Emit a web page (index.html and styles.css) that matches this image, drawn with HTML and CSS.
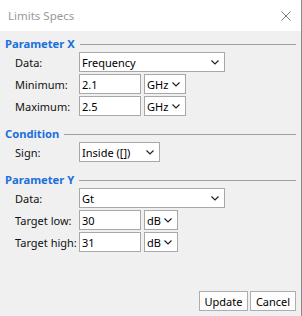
FILE: index.html
```html
<!DOCTYPE html>
<html lang="en">
<head>
    <meta charset="UTF-8">
    <title>Limits Specs</title>
    <link rel="stylesheet" href="styles.css">
</head>
<body>
    <div class="window">
        <div class="titlebar">
            <span class="title">Limits Specs</span>
            <span class="close">
                <svg width="10" height="10" viewBox="0 0 10 10"><path d="M0.5 0.5 L9.5 9.5 M9.5 0.5 L0.5 9.5" stroke="#7a7a7a" stroke-width="1" fill="none"/></svg>
            </span>
        </div>
        <div class="content">
            <div class="group-title"><span>Parameter X</span><div class="rule"></div></div>
            <div class="rows">
                <label>Data:</label>
                <div class="combo wide"><span>Frequency</span><svg class="chev" width="8" height="5" viewBox="0 0 8 5"><path d="M0.5 0.5 L4 4 L7.5 0.5" stroke="#222" stroke-width="1.2" fill="none"/></svg></div>
                <label>Minimum:</label>
                <div class="pair"><input class="num" value="2.1"><div class="combo unit-ghz"><span>GHz</span><svg class="chev" width="8" height="5" viewBox="0 0 8 5"><path d="M0.5 0.5 L4 4 L7.5 0.5" stroke="#222" stroke-width="1.2" fill="none"/></svg></div></div>
                <label>Maximum:</label>
                <div class="pair"><input class="num" value="2.5"><div class="combo unit-ghz"><span>GHz</span><svg class="chev" width="8" height="5" viewBox="0 0 8 5"><path d="M0.5 0.5 L4 4 L7.5 0.5" stroke="#222" stroke-width="1.2" fill="none"/></svg></div></div>
            </div>

            <div class="group-title"><span>Condition</span><div class="rule"></div></div>
            <div class="rows">
                <label>Sign:</label>
                <div class="combo sign"><span>Inside ([])</span><svg class="chev" width="8" height="5" viewBox="0 0 8 5"><path d="M0.5 0.5 L4 4 L7.5 0.5" stroke="#222" stroke-width="1.2" fill="none"/></svg></div>
            </div>

            <div class="group-title"><span>Parameter Y</span><div class="rule"></div></div>
            <div class="rows">
                <label>Data:</label>
                <div class="combo wide"><span>Gt</span><svg class="chev" width="8" height="5" viewBox="0 0 8 5"><path d="M0.5 0.5 L4 4 L7.5 0.5" stroke="#222" stroke-width="1.2" fill="none"/></svg></div>
                <label>Target low:</label>
                <div class="pair"><input class="num" value="30"><div class="combo unit-db"><span>dB</span><svg class="chev" width="8" height="5" viewBox="0 0 8 5"><path d="M0.5 0.5 L4 4 L7.5 0.5" stroke="#222" stroke-width="1.2" fill="none"/></svg></div></div>
                <label>Target high:</label>
                <div class="pair"><input class="num" value="31"><div class="combo unit-db"><span>dB</span><svg class="chev" width="8" height="5" viewBox="0 0 8 5"><path d="M0.5 0.5 L4 4 L7.5 0.5" stroke="#222" stroke-width="1.2" fill="none"/></svg></div></div>
            </div>

            <div class="buttons">
                <button class="btn update">Update</button>
                <button class="btn cancel">Cancel</button>
            </div>
        </div>
    </div>
</body>
</html>
```

FILE: styles.css
```css
body {
    margin: 0;
    font-family: "Noto Sans", "Open Sans", sans-serif;
    font-size: 11px;
}
.window {
    width: 301px;
    height: 316px;
    border-right: 1px solid #8a8a8a;
    display: flex;
    flex-direction: column;
    background: #f0f0f0;
}
.titlebar {
    height: 31px;
    background: #fff;
    display: flex;
    align-items: center;
    padding-left: 8px;
    box-sizing: border-box;
}
.title {
    color: #999;
    font-size: 11.5px;
    flex: 1;
}
.close {
    width: 10px;
    height: 10px;
    margin-right: 10px;
    display: flex;
}
.content {
    flex: 1;
    display: flex;
    flex-direction: column;
    padding: 4px 5px 5px 5px;
}
.group-title {
    height: 17px;
    display: flex;
    align-items: center;
    gap: 5px;
    color: #1a6fdc;
    font-weight: bold;
    font-size: 11.2px;
}
.group-title .rule {
    flex: 1;
    height: 1px;
    background: #a0a0a0;
    margin-top: 1px;
}
.rows {
    display: grid;
    grid-template-columns: 64px auto;
    grid-auto-rows: 20px;
    row-gap: 2px;
    align-items: center;
    padding-left: 10px;
    margin-bottom: 9px;
    justify-items: start;
}
.rows label {
    color: #111;
    white-space: nowrap;
}
.pair {
    display: flex;
    gap: 3px;
}
.combo, .num {
    height: 20px;
    box-sizing: border-box;
    border: 1px solid #a8a8a8;
    background: #fff;
    font-family: inherit;
    font-size: 11px;
    color: #000;
    white-space: nowrap;
}
.combo {
    display: flex;
    align-items: center;
    justify-content: space-between;
    padding: 0 5px 0 2px;
}
.num {
    width: 62px;
    padding: 0 2px;
    outline: none;
}
.wide { width: 146px; }
.sign { width: 81px; }
.unit-ghz { width: 42px; }
.unit-db { width: 34px; }
.chev { flex: none; }
.buttons {
    margin-top: auto;
    display: flex;
    justify-content: flex-end;
    gap: 2px;
}
.btn {
    height: 20px;
    padding: 0;
    border: 1px solid #adadad;
    background: #fdfdfd;
    font-family: inherit;
    font-size: 11px;
    color: #000;
}
.update { width: 49px; }
.cancel { width: 46px; }
```
